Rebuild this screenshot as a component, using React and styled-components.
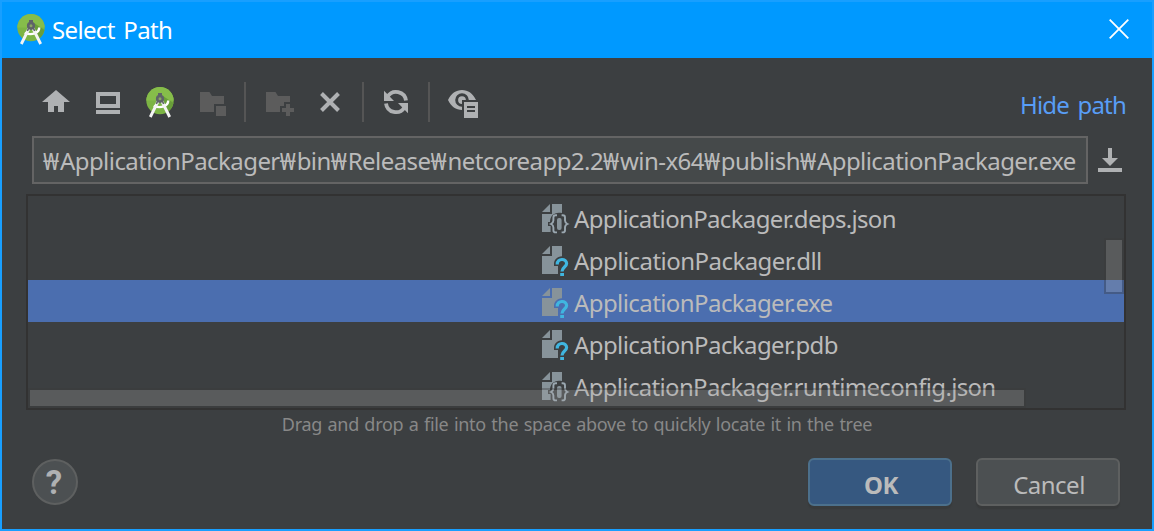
import React from 'react';
import styled, { createGlobalStyle } from 'styled-components';

const Global = createGlobalStyle`
  * { box-sizing: border-box; }
  body { margin: 0; background: #3c3f41; }
  svg { display: block; flex: none; }
`;

const Dialog = styled.div`
  width: 1154px;
  height: 531px;
  border: 2px solid #189fff;
  background: #3c3f41;
  color: #bbbbbb;
  font-family: 'Noto Sans', 'Open Sans', sans-serif;
  font-size: 24px;
  display: flex;
  flex-direction: column;
  overflow: hidden;
`;

const TitleBar = styled.header`
  height: 56px;
  flex: none;
  background: #0099ff;
  color: #fff;
  display: flex;
  align-items: center;
  padding: 0 23px 2px 13px;
`;

const Text = styled.span`
  white-space: pre;
  line-height: 32px;
  letter-spacing: ${(p) => p.$track || 0}px;
  word-spacing: ${(p) => p.$words || 0}px;
`;

const Title = styled(Text)`
  flex: 1;
  margin-left: 5px;
  padding-top: 2px;
`;

const Toolbar = styled.div`
  height: 78px;
  flex: none;
  display: flex;
  align-items: flex-start;
  padding: 24px 26px 0 38px;
`;

const Tools = styled.div`
  display: flex;
  align-items: center;
  flex: 1;
  height: 40px;
`;

const Tool = styled.button`
  width: 32px;
  height: 32px;
  padding: 0;
  border: 0;
  background: none;
  margin-right: ${(p) => p.$gap ?? 20}px;
`;

const Divider = styled.i`
  width: 2px;
  height: 40px;
  background: #555555;
  margin-right: 16px;
`;

const Link = styled(Text)`
  color: #589df6;
  margin-top: 7px;
`;

const PathRow = styled.div`
  display: flex;
  align-items: center;
  padding-left: 30px;
  height: 48px;
  flex: none;
`;

const PathField = styled.div`
  width: 1056px;
  height: 48px;
  border: 2px solid #646464;
  background: #45494a;
  padding: 2px 0 0 9px;
  display: flex;
  align-items: center;
  overflow: hidden;
`;

const Separator = styled.span`
  letter-spacing: 0.85px;
`;

const HistoryButton = styled(Tool)`
  margin: 0 0 0 6px;
`;

const FileTree = styled.div`
  position: relative;
  width: 1100px;
  height: 216px;
  flex: none;
  margin: 10px 0 0 24px;
  border: 2px solid #323232;
  overflow: hidden;
`;

const FileRow = styled.div`
  height: 42px;
  display: flex;
  align-items: center;
  gap: 4px;
  padding: 4px 0 0 514px;
  background: ${(p) => (p.$selected ? '#4b6eaf' : 'transparent')};
`;

const Thumb = styled.div`
  position: absolute;
  background: rgba(166, 166, 166, 0.28);
  box-shadow: 0 0 0 2px rgba(56, 56, 56, 0.35);
`;

const VerticalThumb = styled(Thumb)`
  right: 2px;
  top: 44px;
  width: 16px;
  height: 52px;
`;

const HorizontalThumb = styled(Thumb)`
  left: 2px;
  bottom: 2px;
  width: 994px;
  height: 16px;
`;

const Hint = styled.div`
  text-align: center;
  height: 28px;
  flex: none;
  color: #888888;
  font-size: 18px;

  span { line-height: 28px; }
`;

const Footer = styled.footer`
  display: flex;
  align-items: center;
  gap: 24px;
  height: 48px;
  flex: none;
  margin-top: 20px;
  padding: 0 32px 0 29.5px;
`;

const HelpButton = styled.button`
  width: 46px;
  height: 46px;
  border-radius: 50%;
  border: 2px solid #5e6060;
  background: #4c5052;
  color: #afb1b3;
  font: 700 33px/42px Roboto, sans-serif;
  padding: 1px 1px 0 0;
  margin-right: auto;
`;

const Button = styled.button`
  width: 144px;
  height: 48px;
  padding: 4px 0 0 2px;
  border-radius: 6px;
  border: 2px solid ${(p) => (p.$primary ? '#4c708c' : '#5e6060')};
  background: ${(p) => (p.$primary ? '#365880' : '#4c5052')};
  box-shadow: 0 3px 1px #383a3b;
  color: #bbbbbb;
  font-family: inherit;
  font-size: 24px;
  letter-spacing: -0.5px;
  font-weight: ${(p) => (p.$primary ? 700 : 400)};
`;

const LIGHT = '#afb1b3';
const DIM = '#5c5c5c';

const Glyph = ({ children, size = 32 }) => (
  <svg width={size} height={size} viewBox="0 0 32 32">{children}</svg>
);

const StudioIcon = () => (
  <Glyph>
    <circle cx="16" cy="14.6" r="13.7" fill="#7cb444" />
    <path d="M2.3 14.600a13.700 13.700 0 0 1 27.400 0z" fill="#86bd4a" />
    <path d="M19 10l10.500 7a13.700 13.700 0 0 1-7 9.500z" fill="#689d39" />
    <path d="M24.200 14.500c.2 5.500-7.500 8.500-14.500 5.300" fill="none" stroke="#fff" strokeWidth="2.400" />
    <path d="M14 15.500L6.300 31M18 15.500L25.700 31" stroke="#f4f4f4" strokeWidth="2.900" />
    <path d="M14 7h4v4h-4z" fill="#5f6368" />
    <circle cx="16" cy="12.800" r="2.800" fill="#8aa562" stroke="#5f6368" strokeWidth="2.600" />
    <path d="M13.400 15.500l-1 2.500M18.600 15.500l1 2.500" stroke="#5f6368" strokeWidth="1.600" />
  </Glyph>
);

const HomeIcon = () => (
  <Glyph><path d="M16 4L30 16H24V26H18V20H14V26H8V16H2z" fill={LIGHT} /></Glyph>
);

const DesktopIcon = () => (
  <Glyph>
    <path fillRule="evenodd" d="M4 6H28V22H4zM8 10V18H24V10zM4 24H28V28H4z" fill={LIGHT} />
  </Glyph>
);

const ModuleIcon = () => (
  <Glyph>
    <path d="M4 6H13.5L16 10H28V18H18V26H4zM20 20H30V30H20z" fill={DIM} />
  </Glyph>
);

const NewFolderIcon = () => (
  <Glyph>
    <path d="M4 6H13.5L16 10H28V16H22V20H18V26H4zM24 18H28V22H32V26H28V30H24V26H20V22H24z" fill={DIM} />
  </Glyph>
);

const DeleteIcon = () => (
  <Glyph><path d="M7.5 7.5L24.5 24.5M24.5 7.5L7.5 24.5" stroke={LIGHT} strokeWidth="4" /></Glyph>
);

const RefreshIcon = () => (
  <Glyph>
    <path d="M7.6 10.6A10 10 0 0 1 26 14.6M24.4 21.4A10 10 0 0 1 6 17.4" fill="none" stroke={LIGHT} strokeWidth="3.8" />
    <path d="M4 4.8V15H14zM28 27.2V17H18z" fill={LIGHT} />
  </Glyph>
);

const HiddenFilesIcon = () => (
  <Glyph>
    <path
      fillRule="evenodd"
      d="M2 14C5 7.5 10 4 16 4S27 7.5 30 14H16V24C10 24 5 20.5 2 14zM16 7.2a6.8 6.8 0 1 0 0 13.6V14h6.8A6.8 6.8 0 0 0 16 7.2z"
      fill={LIGHT}
    />
    <path d="M16 10.2a3.9 3.9 0 1 0 0 7.8V14h3.9A3.9 3.9 0 0 0 16 10.2z" fill={LIGHT} />
    <path fillRule="evenodd" d="M18 16H32V32H18zM21 20V22H29V20zM21 24V26H29V24z" fill={LIGHT} />
  </Glyph>
);

const DownloadIcon = () => (
  <Glyph><path d="M14 4H18V14H24L16 22L8 14H14zM4 24H28V28H4z" fill={LIGHT} /></Glyph>
);

const CloseIcon = () => (
  <svg width="20" height="20" viewBox="0 0 20 20">
    <path d="M.7.7L19.3 19.3M19.3.7L.7 19.3" stroke="#fff" strokeWidth="1.8" />
  </svg>
);

const JsonFileIcon = () => (
  <svg width="28" height="30" viewBox="0 0 28 30">
    <path d="M0 8L8 0V8zM10 0H20V9C13 7.5 8 11 8 18H6V22H8.6V28H0V10H10z" fill="#87939a" />
    <path
      d="M15 11.2h-1.4q-2.2 0-2.2 2.2v3.2q0 2.3-2.4 3.4q2.4 1.1 2.4 3.4v2.8q0 2.2 2.2 2.2H15M19.6 11.2h1.2q2.2 0 2.2 2.2v3.2q0 2.3 2.4 3.4q-2.4 1.1-2.4 3.4v2.8q0 2.2-2.2 2.2h-1.2"
      fill="none" stroke="#9aa7b0" strokeWidth="1.9"
    />
    <rect x="15" y="14" width="4.6" height="12" rx="2" fill="#87939a" />
  </svg>
);

const UnknownFileIcon = () => (
  <svg width="28" height="30" viewBox="0 0 28 30">
    <path d="M0 8L8 0V8zM10 0H20V10.2C15 10.7 12 13.5 12 18V20H16V28H0V10H10z" fill="#87939a" />
    <path d="M15.2 18.4C15.2 12 24.6 12 24.6 17.6C24.6 21.2 20 21 20 25.6" fill="none" stroke="#40b6e0" strokeWidth="3.2" />
    <path d="M18.2 27H22V30H18.2z" fill="#40b6e0" />
  </svg>
);

const pathParts = [
  'ApplicationPackager', 'bin', 'Release', 'netcoreapp2.2',
  'win-x64', 'publish', 'ApplicationPackager.exe',
];

const files = [
  { name: 'ApplicationPackager.deps.json', Icon: JsonFileIcon, track: -0.66 },
  { name: 'ApplicationPackager.dll', Icon: UnknownFileIcon, track: -0.54 },
  { name: 'ApplicationPackager.exe', Icon: UnknownFileIcon, track: -0.58, selected: true },
  { name: 'ApplicationPackager.pdb', Icon: UnknownFileIcon, track: -0.58 },
  { name: 'ApplicationPackager.runtimeconfig.json', Icon: JsonFileIcon, track: -0.67 },
];

export default function App() {
  return (
    <>
      <Global />
      <Dialog>
        <TitleBar>
          <StudioIcon />
          <Title $track={-0.65} $words={3}>Select Path</Title>
          <CloseIcon />
        </TitleBar>
        <Toolbar>
          <Tools>
            <Tool><HomeIcon /></Tool>
            <Tool><DesktopIcon /></Tool>
            <Tool><StudioIcon /></Tool>
            <Tool $gap={16}><ModuleIcon /></Tool>
            <Divider />
            <Tool><NewFolderIcon /></Tool>
            <Tool $gap={16}><DeleteIcon /></Tool>
            <Divider />
            <Tool $gap={16}><RefreshIcon /></Tool>
            <Divider />
            <Tool><HiddenFilesIcon /></Tool>
          </Tools>
          <Link $track={-0.8} $words={3}>Hide path</Link>
        </Toolbar>
        <PathRow>
          <PathField>
            <Text $track={-0.56}>
              {pathParts.map((part, i) => (
                <React.Fragment key={i}><Separator>₩</Separator>{part}</React.Fragment>
              ))}
            </Text>
          </PathField>
          <HistoryButton><DownloadIcon /></HistoryButton>
        </PathRow>
        <FileTree>
          {files.map(({ name, Icon, track, selected }) => (
            <FileRow key={name} $selected={selected}>
              <Icon />
              <Text $track={track}>{name}</Text>
            </FileRow>
          ))}
          <VerticalThumb />
          <HorizontalThumb />
        </FileTree>
        <Hint>
          <Text $track={-0.28} $words={1}>Drag and drop a file into the space above to quickly locate it in the tree</Text>
        </Hint>
        <Footer>
          <HelpButton>?</HelpButton>
          <Button $primary>OK</Button>
          <Button>Cancel</Button>
        </Footer>
      </Dialog>
    </>
  );
}
